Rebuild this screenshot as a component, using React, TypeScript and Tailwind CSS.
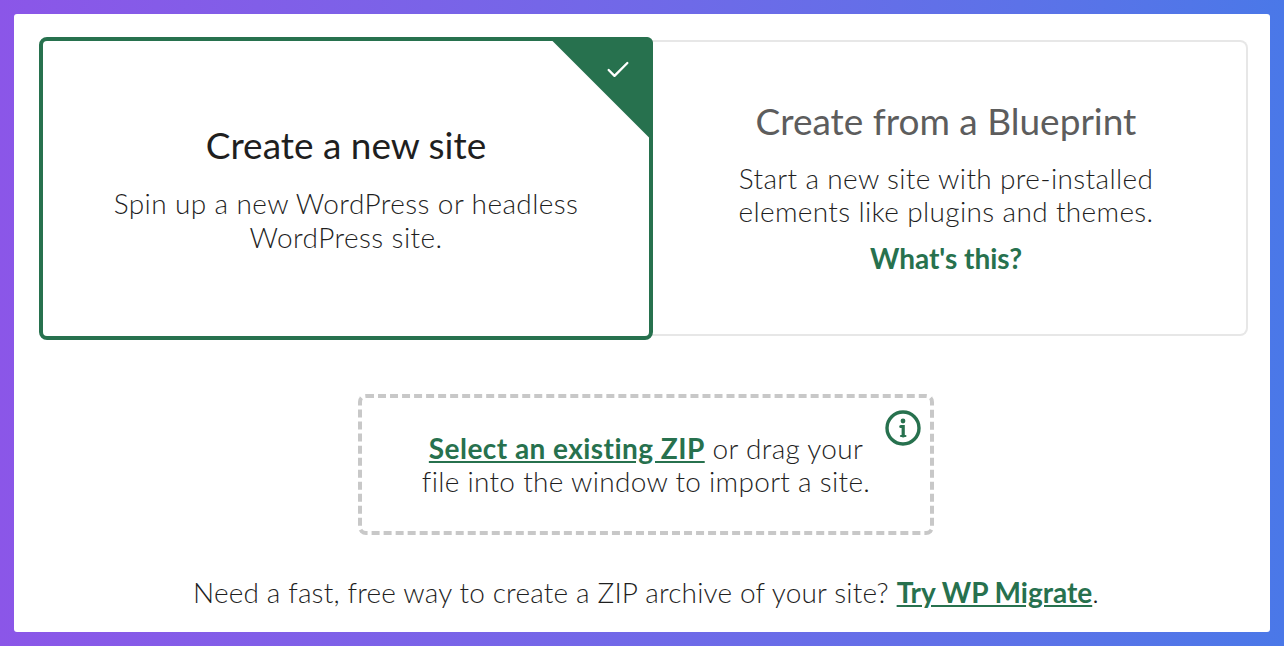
import { Check } from 'lucide-react'

const font = { fontFamily: 'Lato, sans-serif' }

function SelectedCorner() {
  return (
    <div className="absolute top-[-4px] right-[-4px] flex h-[105px] w-[105px] justify-end rounded-tr-md bg-[#27714e] [clip-path:polygon(0_0,100%_0,100%_100%)]">
      <Check className="mt-[19px] mr-[21px] h-[28px] w-[28px] text-white" strokeWidth={2} />
    </div>
  )
}

function InfoIcon() {
  return (
    <svg viewBox="0 0 36 36" className="absolute top-[12px] right-[9px] h-[36px] w-[36px]">
      <circle cx="18" cy="18" r="16" fill="none" stroke="#27714e" strokeWidth="3.4" />
      <circle cx="18" cy="11" r="2.4" fill="#27714e" />
      <path d="M15.8 16.5h2.4v9.5" fill="none" stroke="#27714e" strokeWidth="3.2" strokeLinecap="round" />
      <path d="M16 26h4.4" fill="none" stroke="#27714e" strokeWidth="2.2" strokeLinecap="round" />
    </svg>
  )
}

export default function App() {
  return (
    <div
      className="h-[646px] w-[1284px] bg-gradient-to-r from-[#8b56e8] to-[#4a78e8] p-[14px] text-[#1f1f1f]"
      style={font}
    >
      <div className="flex h-[618px] flex-col items-center rounded-[3px] bg-white pt-[26px] pr-[22px] pl-[25px]">
        <div className="grid w-full grid-cols-[614px_1fr]">
          <div className="relative z-10 -my-[3.5px] flex flex-col items-center rounded-lg border-4 border-[#27714e] bg-white pt-[82px] text-center">
            <SelectedCorner />
            <h2 className="text-[37px] leading-[44px] font-normal">Create a new site</h2>
            <p className="mt-[19px] w-[500px] text-[28px] leading-[34px] font-light tracking-[0.4px]">
              Spin up a new WordPress or headless WordPress site.
            </p>
          </div>
          <div className="-ml-[2px] flex h-[296px] flex-col items-center rounded-r-lg border-2 border-l-0 border-[#e7e7e7] pt-[57px] pr-[5px] text-center">
            <h2 className="text-[37px] leading-[44px] font-normal text-[#5d5d5d]">Create from a Blueprint</h2>
            <p className="mt-[19px] w-[480px] text-[28px] leading-[33px] font-light tracking-[0.35px]">
              Start a new site with pre-installed elements like plugins and themes.
            </p>
            <a className="mt-[13px] text-[28px] leading-[34px] font-bold text-[#27714e]">What's this?</a>
          </div>
        </div>

        <div className="relative mt-[58px] ml-[5px] flex h-[141px] w-[576px] flex-col items-center justify-center rounded-lg border-4 border-dashed border-[#c8c8c8] text-center text-[28px] leading-[33px] font-light tracking-[0.3px]">
          <InfoIcon />
          <p className="w-[450px]">
            <a className="font-bold tracking-[0.45px] text-[#27714e] underline">Select an existing ZIP</a> or drag your file into the window to import a site.
          </p>
        </div>

        <p className="mt-[40px] ml-[5px] text-[28px] leading-[34px] font-light tracking-[0.17px]">
          Need a fast, free way to create a ZIP archive of your site?{' '}
          <a className="font-bold tracking-normal text-[#27714e] underline">Try WP Migrate</a>.
        </p>
      </div>
    </div>
  )
}
